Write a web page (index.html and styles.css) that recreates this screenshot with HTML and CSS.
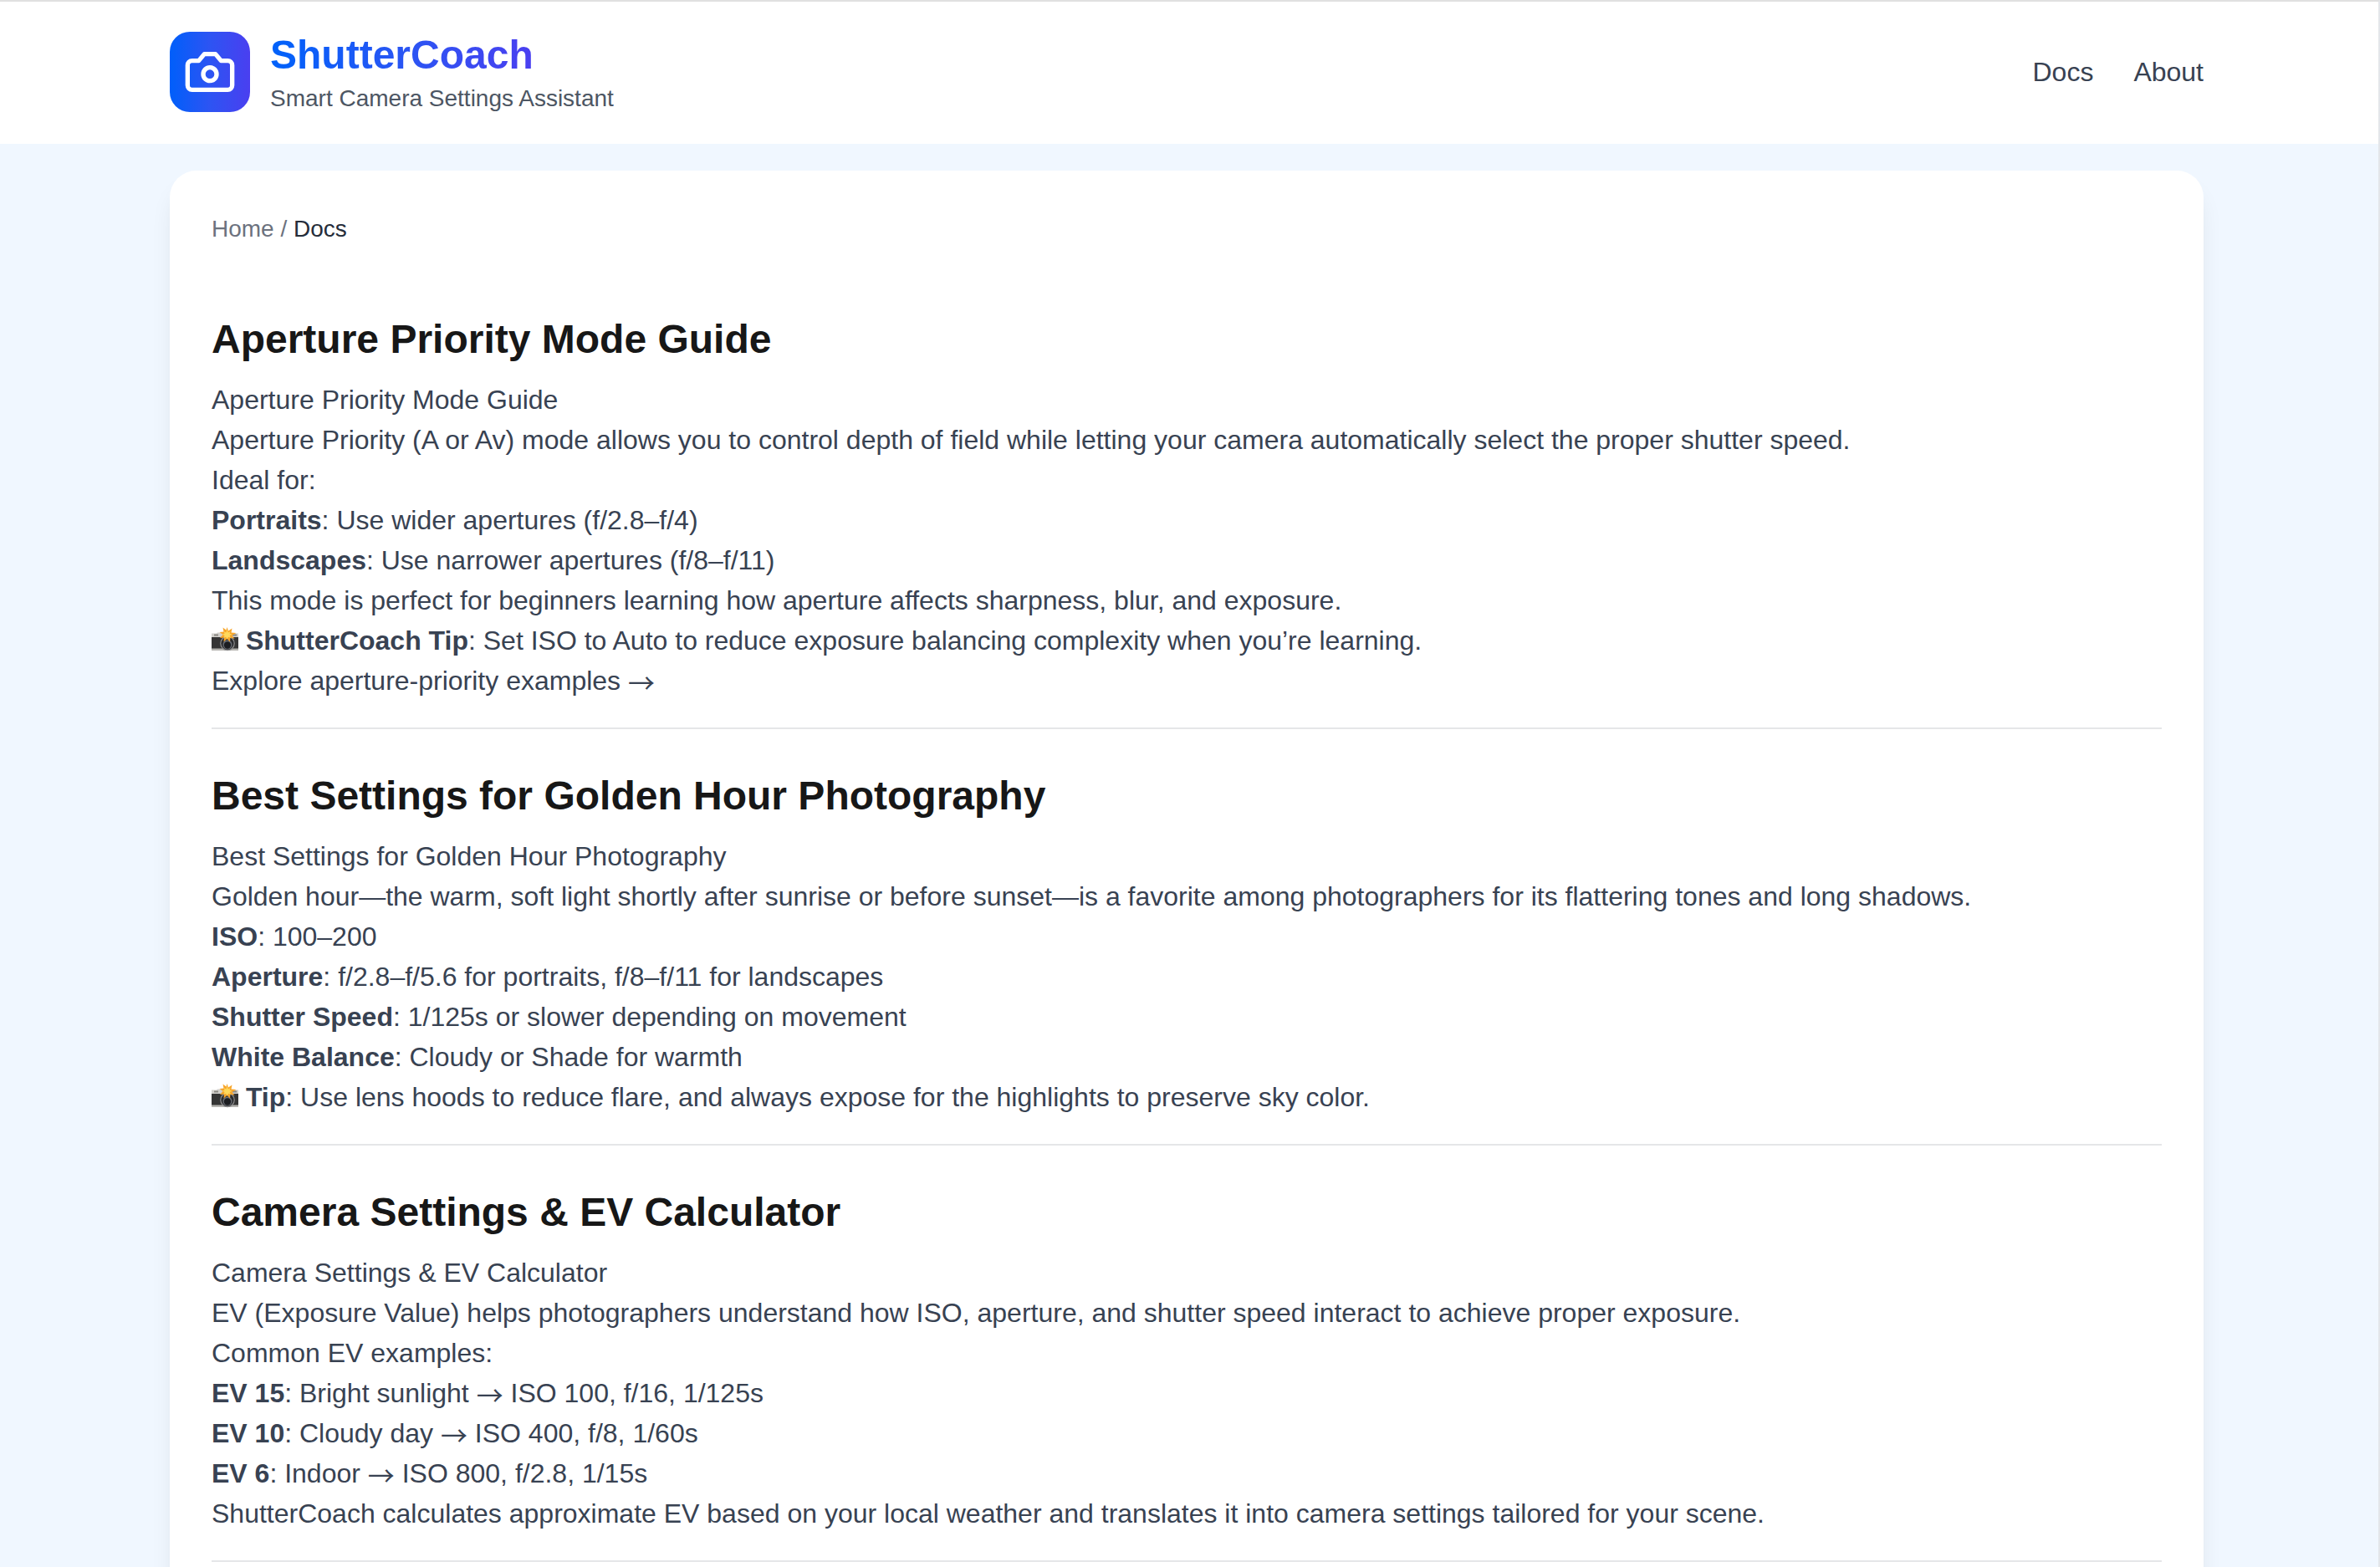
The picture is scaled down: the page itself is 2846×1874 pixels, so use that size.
FILE: index.html
```html
<!DOCTYPE html>
<html lang="en">
<head>
<meta charset="utf-8">
<title>ShutterCoach Docs</title>
<link rel="stylesheet" href="styles.css">
</head>
<body>
<svg class="defs" width="0" height="0" aria-hidden="true">
  <defs>
    <symbol id="flash-camera" viewBox="0 0 32 32">
      <path d="M0 7.500h6l1-1h4l1 1h20V13H0z" fill="#d2d0cc"/>
      <path d="M0 12h32v14H0z" fill="#353535"/>
      <path d="M0 25.500h32v2.500H0z" fill="#b5b4b0"/>
      <path d="M3 8.500h5v2H3zM25 8.500h5v2h-5z" fill="#8a8882"/>
      <circle cx="19" cy="19.500" r="8.800" fill="#8d8d8d"/>
      <circle cx="19" cy="19.500" r="7.600" fill="#2a2b2e"/>
      <circle cx="19" cy="21" r="5.500" fill="#6a6e75"/>
      <circle cx="19" cy="21.500" r="4.200" fill="#1b1d21"/>
      <path d="M18.500 0l1.500 4.500 4.500-3-1 5 6 .5-5 3 3 4-5-1.500-.5 5-3.500-3.500-4 3.500 .5-5-5 .5 3.500-4-4-3 5-.5-1-5 4 3z" fill="#f7a62c"/>
      <path d="M18.600 3l1.200 3.500 2.600-1.300-.8 2.600 3 1-3 1.300 1.300 2.600-2.900-1-1.400 2.800-1.400-2.800-2.700 1 1.100-2.700-2.800-1.200 2.800-1-.8-2.600 2.600 1.300z" fill="#ffd95c"/>
    </symbol>
  </defs>
</svg>
<header class="site-header">
  <div class="container header-row">
    <div class="brand">
      <div class="logo">
        <svg viewBox="0 0 24 24" fill="none" stroke="currentColor" stroke-width="2" stroke-linecap="round" stroke-linejoin="round"><path d="M14.500 4h-5L7 7H4a2 2 0 0 0-2 2v9a2 2 0 0 0 2 2h16a2 2 0 0 0 2-2V9a2 2 0 0 0-2-2h-3l-2.500-3z"/><circle cx="12" cy="13" r="3"/></svg>
      </div>
      <div>
        <div class="brand-name">ShutterCoach</div>
        <div class="tagline">Smart Camera Settings Assistant</div>
      </div>
    </div>
    <nav class="nav"><a>Docs</a><a>About</a></nav>
  </div>
</header>
<main class="container">
  <div class="card">
    <div class="breadcrumb">Home / <span>Docs</span></div>
    <article class="doc">
      <h2>Aperture Priority Mode Guide</h2>
      <p>Aperture Priority Mode Guide</p>
      <p>Aperture Priority (A or Av) mode allows you to control depth of field while letting your camera automatically select the proper shutter speed.</p>
      <p>Ideal for:</p>
      <p><strong>Portraits</strong>: Use wider apertures (f/2.8–f/4)</p>
      <p><strong>Landscapes</strong>: Use narrower apertures (f/8–f/11)</p>
      <p>This mode is perfect for beginners learning how aperture affects sharpness, blur, and exposure.</p>
      <p><svg class="emoji"><use href="#flash-camera"/></svg> <strong>ShutterCoach Tip</strong>: Set ISO to Auto to reduce exposure balancing complexity when you’re learning.</p>
      <p>Explore aperture-priority examples <span class="arrow">→</span></p>
    </article>
    <article class="doc">
      <h2>Best Settings for Golden Hour Photography</h2>
      <p>Best Settings for Golden Hour Photography</p>
      <p>Golden hour—the warm, soft light shortly after sunrise or before sunset—is a favorite among photographers for its flattering tones and long shadows.</p>
      <p><strong>ISO</strong>: 100–200</p>
      <p><strong>Aperture</strong>: f/2.8–f/5.6 for portraits, f/8–f/11 for landscapes</p>
      <p><strong>Shutter Speed</strong>: 1/125s or slower depending on movement</p>
      <p><strong>White Balance</strong>: Cloudy or Shade for warmth</p>
      <p><svg class="emoji"><use href="#flash-camera"/></svg> <strong>Tip</strong>: Use lens hoods to reduce flare, and always expose for the highlights to preserve sky color.</p>
    </article>
    <article class="doc">
      <h2>Camera Settings &amp; EV Calculator</h2>
      <p>Camera Settings &amp; EV Calculator</p>
      <p>EV (Exposure Value) helps photographers understand how ISO, aperture, and shutter speed interact to achieve proper exposure.</p>
      <p>Common EV examples:</p>
      <p><strong>EV 15</strong>: Bright sunlight <span class="arrow">→</span> ISO 100, f/16, 1/125s</p>
      <p><strong>EV 10</strong>: Cloudy day <span class="arrow">→</span> ISO 400, f/8, 1/60s</p>
      <p><strong>EV 6</strong>: Indoor <span class="arrow">→</span> ISO 800, f/2.8, 1/15s</p>
      <p>ShutterCoach calculates approximate EV based on your local weather and translates it into camera settings tailored for your scene.</p>
    </article>
  </div>
</main>
</body>
</html>
```
FILE: styles.css
```css
* { box-sizing: border-box; margin: 0; padding: 0; }
html { height: 100%; overflow: hidden; }
body {
  height: 100vh;
  overflow: hidden;
  border-top: 2px solid #e0e0e0;
  border-right: 2px solid #e3e6ea;
  background: #f0f7ff;
  color: #384252;
  font: 32px/48px "Liberation Sans", Arial, sans-serif;
}
.defs { position: absolute; }
.container { width: 2432px; margin-left: 203px; }
.site-header { height: 170px; background: #fff; }
.header-row { height: 168px; display: flex; align-items: center; justify-content: space-between; }
.brand { display: flex; align-items: center; gap: 24px; }
.logo {
  width: 96px; height: 96px; border-radius: 24px;
  display: flex; align-items: center; justify-content: center;
  background: linear-gradient(90deg, #005ffa, #2d54f3 50%, #4a3ff0);
  color: #fff;
}
.logo svg { width: 64px; height: 64px; }
.brand-name {
  width: max-content;
  font-size: 48px; line-height: 64px; font-weight: 700;
  background: linear-gradient(90deg, #0062fa, #2d54f3 55%, #4a3ff0);
  -webkit-background-clip: text; background-clip: text; color: transparent;
}
.tagline { font-size: 28px; line-height: 40px; color: #4d5663; }
.nav { display: flex; gap: 48px; }
.card {
  margin-top: 32px;
  padding: 50px;
  border-radius: 32px;
  background: #fff;
  box-shadow: 0 20px 30px -6px rgba(0,0,0,.09), 0 8px 12px -8px rgba(0,0,0,.09);
}
.breadcrumb { font-size: 28px; line-height: 40px; color: #6c727e; }
.breadcrumb span { color: #252d3a; }
.doc { padding: 48px 0 32px; border-bottom: 2px solid #e5e6e8; }
.breadcrumb + .doc { padding-top: 80px; }
h2 { font-size: 48px; line-height: 64px; font-weight: 700; color: #171717; margin-bottom: 16px; }
.doc p { height: 48px; white-space: nowrap; }
.emoji { width: 32px; height: 32px; vertical-align: -5px; }
.arrow { font-family: "Noto Sans CJK JP", sans-serif; line-height: 1; position: relative; top: 4px; }
```
